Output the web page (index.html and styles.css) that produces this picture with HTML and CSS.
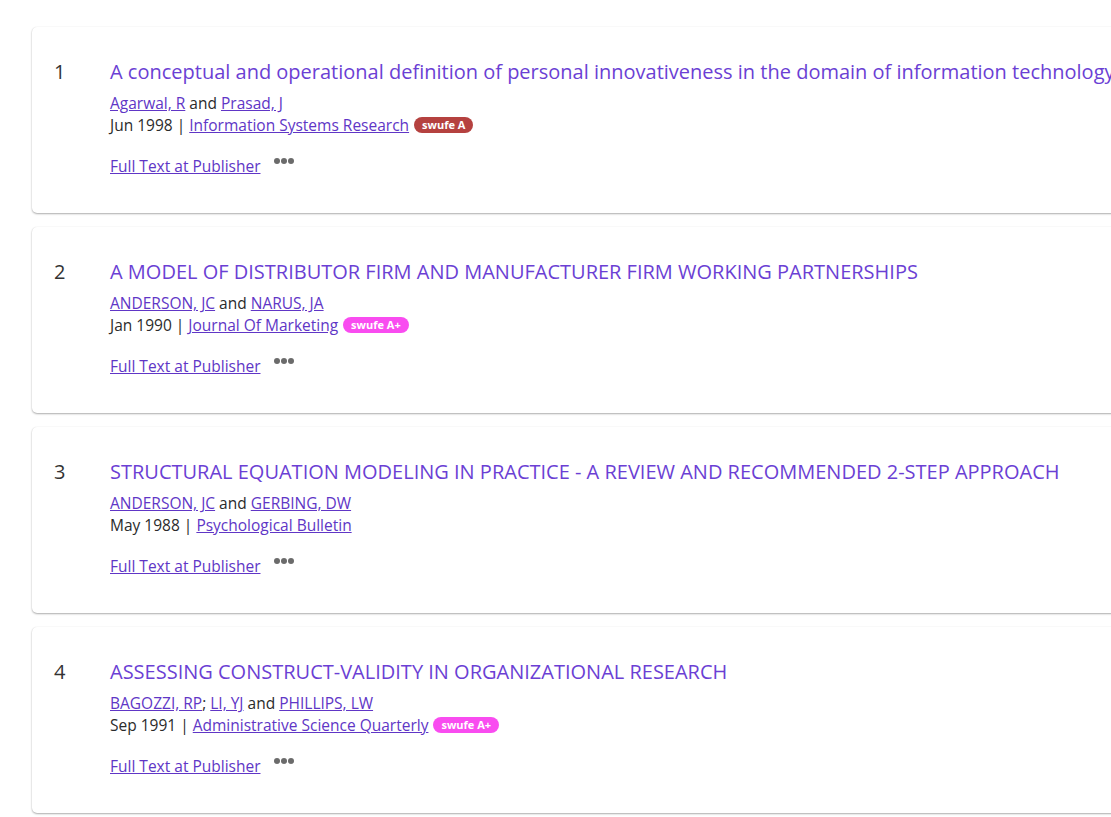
FILE: index.html
```html
<!DOCTYPE html>
<html lang="en">
<head>
<meta charset="utf-8">
<title>Results</title>
<link rel="stylesheet" href="styles.css">
</head>
<body>
<div class="page">
<main class="list">
  <article class="card">
    <div class="num">1</div>
    <div class="body">
      <a class="title" href="#">A conceptual and operational definition of personal innovativeness in the domain of information technology</a>
      <div class="authors"><a href="#">Agarwal, R</a> and <a href="#">Prasad, J</a></div>
      <div class="meta"><span>Jun 1998 | <a href="#">Information Systems Research</a></span><span class="badge badge-a">swufe A</span></div>
      <div class="actions"><a href="#">Full Text at Publisher</a><span class="more"><i></i><i></i><i></i></span></div>
    </div>
  </article>
  <article class="card">
    <div class="num">2</div>
    <div class="body">
      <a class="title" href="#">A MODEL OF DISTRIBUTOR FIRM AND MANUFACTURER FIRM WORKING PARTNERSHIPS</a>
      <div class="authors"><a href="#">ANDERSON, JC</a> and <a href="#">NARUS, JA</a></div>
      <div class="meta"><span>Jan 1990 | <a href="#">Journal Of Marketing</a></span><span class="badge badge-ap">swufe A+</span></div>
      <div class="actions"><a href="#">Full Text at Publisher</a><span class="more"><i></i><i></i><i></i></span></div>
    </div>
  </article>
  <article class="card">
    <div class="num">3</div>
    <div class="body">
      <a class="title" href="#">STRUCTURAL EQUATION MODELING IN PRACTICE - A REVIEW AND RECOMMENDED 2-STEP APPROACH</a>
      <div class="authors"><a href="#">ANDERSON, JC</a> and <a href="#">GERBING, DW</a></div>
      <div class="meta"><span>May 1988 | <a href="#">Psychological Bulletin</a></span></div>
      <div class="actions"><a href="#">Full Text at Publisher</a><span class="more"><i></i><i></i><i></i></span></div>
    </div>
  </article>
  <article class="card">
    <div class="num">4</div>
    <div class="body">
      <a class="title" href="#">ASSESSING CONSTRUCT-VALIDITY IN ORGANIZATIONAL RESEARCH</a>
      <div class="authors"><a href="#">BAGOZZI, RP</a>; <a href="#">LI, YJ</a> and <a href="#">PHILLIPS, LW</a></div>
      <div class="meta"><span>Sep 1991 | <a href="#">Administrative Science Quarterly</a></span><span class="badge badge-ap">swufe A+</span></div>
      <div class="actions"><a href="#">Full Text at Publisher</a><span class="more"><i></i><i></i><i></i></span></div>
    </div>
  </article>
</main>
</div>
</body>
</html>
```
FILE: styles.css
```css
html, body {
  margin: 0;
  padding: 0;
  background: #ffffff;
}
body {
  font-family: "Open Sans", "Noto Sans", sans-serif;
  color: #1d1d1d;
}
.page {
  width: 100%;
  height: 817px;
  overflow: hidden;
}
.list {
  display: flex;
  flex-direction: column;
  gap: 14px;
  padding: 27px 0 0 32px;
  width: 1200px;
}
.card {
  display: flex;
  background: #fff;
  border-radius: 5px;
  box-shadow: 0 1px 2px rgba(0,0,0,0.32), 0 0 1px rgba(0,0,0,0.10);
  height: 186px;
  box-sizing: border-box;
  padding: 30px 0 0 22px;
}
.num {
  width: 56px;
  flex: none;
  font-size: 20px;
  line-height: 30px;
  color: #333;
}
.body {
  display: flex;
  flex-direction: column;
  align-items: flex-start;
  white-space: nowrap;
}
a {
  color: #6036c6;
}
.title {
  font-size: 20px;
  line-height: 30px;
  text-decoration: none;
  color: #6b3fd4;
  margin-bottom: 5px;
}
.authors, .meta {
  font-size: 15.5px;
  line-height: 22px;
  color: #2b2b2b;
}
.meta {
  display: flex;
  align-items: center;
  gap: 5px;
}
.badge {
  display: inline-block;
  color: #fff;
  font-weight: 700;
  font-size: 11px;
  line-height: 16px;
  padding: 0 8px;
  border-radius: 9px;
}
.badge-a { background: #b5413f; }
.badge-ap { background: #f94cf0; }
.actions {
  display: flex;
  align-items: flex-start;
  gap: 13px;
  margin-top: 19px;
  font-size: 15.5px;
  line-height: 22px;
}
.more {
  display: flex;
  gap: 1px;
  padding-top: 3px;
}
.more i {
  display: block;
  width: 6px;
  height: 6px;
  border-radius: 50%;
  background: #6b6b6b;
}
```
